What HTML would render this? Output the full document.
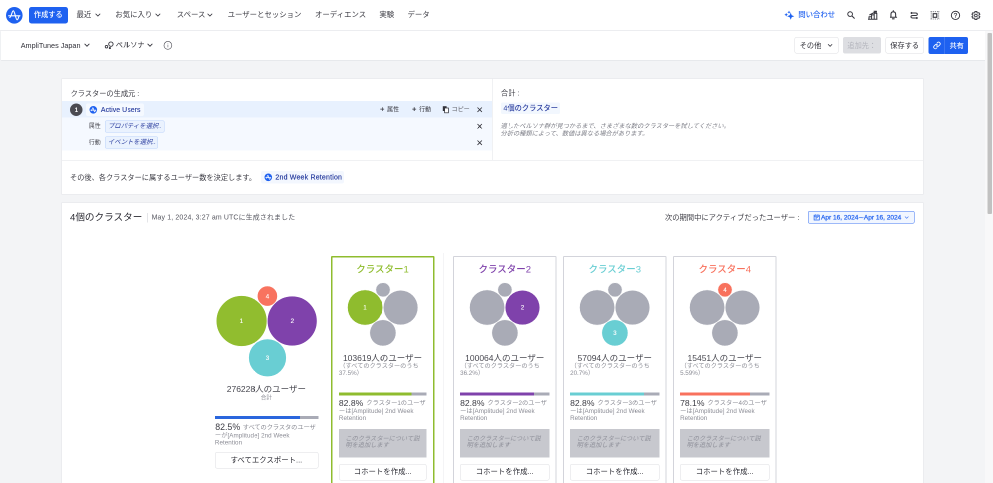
<!DOCTYPE html>
<html lang="ja"><head><meta charset="utf-8"><title>ペルソナ - AmpliTunes Japan</title>
<style>
html,body{margin:0;padding:0;width:993px;height:483px;overflow:hidden;background:#f3f4f6}
#root{position:absolute;left:0;top:0;width:1986px;height:966px;transform:scale(.5);transform-origin:0 0;will-change:transform;font-family:"Liberation Sans","Noto Sans CJK JP",sans-serif;color:#33333b;overflow:hidden;background:#f3f4f6}
#root *{box-sizing:border-box}
.a{position:absolute}
.t{position:absolute;white-space:nowrap;line-height:1;font-size:14.4px}
.nav{font-size:14.8px;color:#3a3a42;top:21.8px}
svg{position:absolute;overflow:visible}
.btn{position:absolute;background:#fff;border:1px solid #dcdde1;border-radius:4px;text-align:center;white-space:nowrap}
.card{position:absolute;top:513.4px;width:203px;height:480px;border:1px solid #c4c5cb;background:#fff}
.ct{position:absolute;left:0;right:0;text-align:center;white-space:nowrap;line-height:1}
.small{font-size:12.5px;color:#8b8c95;line-height:13.8px;position:absolute;white-space:nowrap}
.desc{position:absolute;background:#c7c8ce;color:#8e8f99;font-style:italic;font-size:12.4px;line-height:14.8px;white-space:nowrap}
.lat{letter-spacing:0.1px}
.bar{position:absolute;height:6px;background:#a9abb6}
.bar i{position:absolute;left:0;top:0;bottom:0;display:block}
</style></head><body>
<div id="root">

<!-- top nav -->
<div class="a" id="topnav" style="left:0;top:0;width:1986px;height:60.6px;background:#fff;border-bottom:1px solid #e6e7ea"></div>
<svg style="left:12.2px;top:13.6px;width:33.2px;height:33.2px" viewBox="0 0 20 20"><circle cx="10" cy="10" r="10" fill="#1e61f0"/><path d="M3.2 10.6 H16.8 M4.6 12.6 C6.2 12.6 7.2 4.6 8.8 4.6 C10.6 4.6 11.6 15.4 13.4 15.4 C14.4 15.4 15 12.8 15.6 11.4" fill="none" stroke="#fff" stroke-width="1.3" stroke-linecap="round"/></svg>
<div class="a" style="left:58px;top:14px;width:77.8px;height:33.4px;background:#1e61f0;border-radius:5px"></div>
<div class="t nav" style="left:67.8px;color:#fff;font-size:14.4px;top:22.2px;font-weight:500">作成する</div>
<div class="t nav" style="left:153px">最近</div>
<div class="t nav" style="left:230.6px">お気に入り</div>
<div class="t nav" style="left:353.4px">スペース</div>
<div class="t nav" style="left:455.2px">ユーザーとセッション</div>
<div class="t nav" style="left:630px">オーディエンス</div>
<div class="t nav" style="left:758.8px">実験</div>
<div class="t nav" style="left:815px">データ</div>
<svg class="chev" style="left:189.8px;top:25.8px;width:11.6px;height:7.9px" viewBox="0 0 10 6.8"><path d="M1 1.3 L5 5.3 L9 1.3" fill="none" stroke="#33333b" stroke-width="1.45"/></svg>
<svg class="chev" style="left:310.4px;top:25.8px;width:11.6px;height:7.9px" viewBox="0 0 10 6.8"><path d="M1 1.3 L5 5.3 L9 1.3" fill="none" stroke="#33333b" stroke-width="1.45"/></svg>
<svg class="chev" style="left:414.4px;top:25.8px;width:11.6px;height:7.9px" viewBox="0 0 10 6.8"><path d="M1 1.3 L5 5.3 L9 1.3" fill="none" stroke="#33333b" stroke-width="1.45"/></svg>

<!-- right nav -->
<svg style="left:1568px;top:20px;width:24px;height:24px" viewBox="784 10 12 12"><path d="M790.7 12.6 L791.7 15.2 L794.3 16.2 L791.7 17.2 L790.7 19.8 L789.7 17.2 L787.1 16.2 L789.7 15.2 Z" fill="#1e61f0"/><path d="M786.2 12.9 L786.8 14.1 L788 14.7 L786.8 15.3 L786.2 16.5 L785.6 15.3 L784.4 14.7 L785.6 14.1 Z" fill="#1e61f0"/><path d="M789 10.6 L789.5 11.7 L790.6 12.2 L789.5 12.7 L789 13.8 L788.5 12.7 L787.4 12.2 L788.5 11.7 Z" fill="#1e61f0"/></svg>
<div class="t nav" style="left:1596.4px;color:#2a68f0;font-weight:500;font-size:14.8px">問い合わせ</div>
<!-- search -->
<svg style="left:1693.2px;top:20.8px;width:18px;height:18px" viewBox="0 0 18 18"><circle cx="7.2" cy="7.2" r="4.7" fill="none" stroke="#33333b" stroke-width="1.9"/><path d="M10.8 10.8 L15.6 15.6" stroke="#33333b" stroke-width="2.1" stroke-linecap="round"/></svg>
<!-- chart -->
<svg style="left:1732px;top:18px;width:28px;height:26px" viewBox="866 9 14 13"><path d="M868 19.3 H877.4 M869 19 V16.7 H871.6 V19 M871.6 16.7 V14.9 H874.2 V19 M874.2 14.9 V13.2 H876.8 V19 M869.4 15 L875.8 11.7 M873.6 11.3 L876.5 11.2 L875.9 13.9" fill="none" stroke="#33333b" stroke-width="1" stroke-linejoin="round"/></svg>
<!-- bell -->
<svg style="left:1776.8px;top:19.2px;width:19.2px;height:22px" viewBox="0 0 18 20"><path d="M4.6 14 V8.8 C4.6 5.8 6.4 4 9 4 C11.6 4 13.4 5.8 13.4 8.8 V14 M2.8 14.2 H15.2 M7.4 17.2 H10.6 M9 1.8 V3.8" fill="none" stroke="#33333b" stroke-width="2" stroke-linecap="round"/></svg>
<!-- route -->
<svg style="left:1816px;top:18px;width:24px;height:26px" viewBox="908 9 12 13"><path d="M911 13 H915.5 C918 13 918 15.5 915.5 15.5 H912.8 C910.3 15.5 910.3 18 912.8 18 H917.2 M911.7 12.4 L910.9 13 L911.7 13.6 M916.7 17.4 L917.5 18 L916.7 18.6" fill="none" stroke="#33333b" stroke-width="0.95" stroke-linecap="round" stroke-linejoin="round"/></svg>
<!-- frame -->
<svg style="left:1858px;top:18px;width:24px;height:26px" viewBox="929 9 12 13"><rect x="933.2" y="13.7" width="3.6" height="3.6" fill="none" stroke="#33333b" stroke-width="1.1"/><path d="M931.2 11.2 V19.6 M938.7 11.2 V19.6" stroke="#6b6b73" stroke-width="0.8" stroke-dasharray="1.2 0.9"/><path d="M930.6 11.7 H939.3 M930.6 19 H939.3" stroke="#6b6b73" stroke-width="0.8" stroke-dasharray="1.2 0.9"/></svg>
<!-- help -->
<svg style="left:1898px;top:18px;width:24px;height:26px" viewBox="949 9 12 13"><circle cx="955.5" cy="15.4" r="4.15" fill="none" stroke="#33333b" stroke-width="0.95"/><text x="955.5" y="17.7" font-size="6.6" fill="#33333b" stroke="#33333b" stroke-width="0.15" text-anchor="middle" font-family="Liberation Sans, sans-serif">?</text></svg>
<!-- gear -->
<svg style="left:1940px;top:18px;width:24px;height:26px" viewBox="970 9 12 13"><path d="M974.88 11.42 L976.92 11.42 L976.91 12.57 L977.93 13.16 L978.92 12.58 L979.94 14.34 L978.94 14.91 L978.94 16.09 L979.94 16.66 L978.92 18.42 L977.93 17.84 L976.91 18.43 L976.92 19.58 L974.88 19.58 L974.89 18.43 L973.87 17.84 L972.88 18.42 L971.86 16.66 L972.86 16.09 L972.86 14.91 L971.86 14.34 L972.88 12.58 L973.87 13.16 L974.89 12.57 Z" fill="none" stroke="#33333b" stroke-width="0.9" stroke-linejoin="round"/><circle cx="975.9" cy="15.5" r="1.35" fill="none" stroke="#33333b" stroke-width="0.85"/></svg>

<!-- second bar -->
<div class="a" id="bar2" style="left:1.6px;top:61.6px;width:1969.2px;height:58.6px;background:#fff;box-shadow:0 1px 1.6px #dcdde1"></div>
<div class="t" style="left:41.4px;top:83.6px;font-size:14.5px;color:#2f2f37" id="ws">AmpliTunes Japan</div>
<svg class="chev" style="left:167.82px;top:86.24px;width:11.96px;height:8.32px" viewBox="0 0 10 6.8"><path d="M1 1.3 L5 5.3 L9 1.3" fill="none" stroke="#33333b" stroke-width="1.45"/></svg>
<svg style="left:208px;top:80px;width:22px;height:20px" viewBox="104 40 11 10"><circle cx="106.5" cy="46.7" r="1.25" fill="none" stroke="#33333b" stroke-width="0.85"/><circle cx="110.9" cy="44.1" r="2.2" fill="none" stroke="#33333b" stroke-width="0.9"/><circle cx="109.9" cy="48.1" r="1.05" fill="#33333b"/></svg>
<div class="t" style="left:231.6px;top:83.2px;font-size:14.4px;color:#2f2f37">ペルソナ</div>
<svg class="chev" style="left:293.82px;top:86.24px;width:11.96px;height:8.32px" viewBox="0 0 10 6.8"><path d="M1 1.3 L5 5.3 L9 1.3" fill="none" stroke="#33333b" stroke-width="1.45"/></svg>
<svg style="left:327.2px;top:82px;width:17.6px;height:17.6px" viewBox="0 0 18 18"><circle cx="9" cy="9" r="8" fill="none" stroke="#4a4a52" stroke-width="1.3"/><path d="M9 7.8 V13 M9 5 V6.4" stroke="#77777f" stroke-width="1.4"/></svg>

<div class="btn" style="left:1589.2px;top:74.4px;width:87.6px;height:32.8px"></div>
<div class="t" style="left:1599.4px;top:83.6px;font-size:14.4px;color:#2f2f37">その他</div>
<svg class="chev" style="left:1654.8px;top:87.4px;width:10.4px;height:7.2px" viewBox="0 0 10 6.8"><path d="M1 1.3 L5 5.3 L9 1.3" fill="none" stroke="#33333b" stroke-width="1.45"/></svg>
<div class="a" style="left:1685.8px;top:74.4px;width:76px;height:32.8px;background:#dddee2;border-radius:4px"></div>
<div class="t" style="left:1694.8px;top:83.6px;font-size:14.4px;color:#b3b4bc">追加先：</div>
<div class="btn" style="left:1770.8px;top:74.4px;width:77.4px;height:32.8px"></div>
<div class="t" style="left:1780.6px;top:83.6px;font-size:14.4px;color:#2f2f37">保存する</div>
<div class="a" style="left:1856.6px;top:74px;width:79.8px;height:33.6px;background:#1e61f0;border-radius:4px"></div>
<div class="a" style="left:1888px;top:74px;width:1.2px;height:33.6px;background:#5b8cf5"></div>
<svg style="left:1866px;top:83.4px;width:15.8px;height:15.8px" viewBox="0 0 24 24"><path d="M10 13a5 5 0 0 0 7.54.54l3-3a5 5 0 0 0-7.07-7.07l-1.72 1.71" fill="none" stroke="#fff" stroke-width="2.5" stroke-linecap="round"/><path d="M14 11a5 5 0 0 0-7.54-.54l-3 3a5 5 0 0 0 7.07 7.07l1.71-1.71" fill="none" stroke="#fff" stroke-width="2.5" stroke-linecap="round"/></svg>
<div class="t" style="left:1899.2px;top:84.4px;font-size:14.2px;color:#fff;font-weight:500">共有</div>

<!-- scrollbar -->
<div class="a" style="left:1970.4px;top:61.6px;width:15.6px;height:904.4px;background:#f8f8f9"></div>
<div class="a" style="left:1975.2px;top:65.6px;width:8.4px;height:362.8px;background:#c1c1c1;border-radius:2px"></div>

<!-- panel 1 -->
<div class="a" id="p1" style="left:124px;top:157.8px;width:1722.2px;height:230.2px;background:#fff;box-shadow:0 0 0 1.3px #e7e8eb"></div>
<div class="t" style="left:141.2px;top:180px;font-size:14.4px;color:#3c3c44">クラスターの生成元 :</div>
<div class="a" style="left:124px;top:202.4px;width:860px;height:33px;background:#e8f1fe"></div>
<div class="a" style="left:124px;top:235px;width:860px;height:66.2px;background:#f5f9ff"></div>
<div class="a" style="left:140.2px;top:206.8px;width:25.2px;height:25.2px;border-radius:50%;background:#4b4b52"></div>
<div class="t" style="left:149.6px;top:213.6px;font-size:12px;color:#fff;font-weight:bold">1</div>
<div class="a" style="left:172px;top:207.2px;width:115.6px;height:24.6px;background:#f5f9ff;border-radius:4px"></div>
<svg style="left:179.2px;top:211.8px;width:15.2px;height:15.2px" viewBox="0 0 20 20"><circle cx="10" cy="10" r="10" fill="#1e61f0"/><path d="M3.2 10.8 H16.8 M4.6 12.8 C6.2 12.8 7.2 4.6 8.8 4.6 C10.6 4.6 11.6 15.4 13.4 15.4 C14.4 15.4 15 12.8 15.6 11.4" fill="none" stroke="#fff" stroke-width="1.8" stroke-linecap="round"/></svg>
<div class="t" id="au" style="left:201.8px;top:212.8px;font-size:13.8px;color:#23389c;letter-spacing:0.16px;-webkit-text-stroke:0.24px #23389c">Active Users</div>
<div class="t" style="left:177.6px;top:245.8px;font-size:12px;color:#4a4a52">属性</div>
<div class="a" style="left:210px;top:240.6px;width:119.4px;height:24.4px;background:#eaf2fe;border:1px solid #b9d1fa;border-radius:3px"></div>
<div class="t" style="left:215.8px;top:245.8px;font-size:12.7px;color:#2c3fa0;font-style:italic">プロパティを選択..</div>
<div class="t" style="left:177.6px;top:278.8px;font-size:12px;color:#4a4a52">行動</div>
<div class="a" style="left:210px;top:272.8px;width:106px;height:24.4px;background:#eaf2fe;border:1px solid #b9d1fa;border-radius:3px"></div>
<div class="t" style="left:215.8px;top:278.4px;font-size:12.7px;color:#2c3fa0;font-style:italic">イベントを選択..</div>

<div class="t" style="left:760px;top:210.4px;font-size:15.2px;color:#33333b;font-weight:bold">+</div><div class="t" style="left:774px;top:212.8px;font-size:12.1px;color:#33333b">属性</div>
<div class="t" style="left:824px;top:210.4px;font-size:15.2px;color:#33333b;font-weight:bold">+</div><div class="t" style="left:838.2px;top:212.8px;font-size:12.1px;color:#33333b">行動</div>
<svg style="left:884.4px;top:211.2px;width:14.4px;height:16px" viewBox="0 0 14 16"><rect x="1.4" y="1.4" width="7.6" height="9.6" fill="#33333b"/><rect x="5" y="5" width="7.6" height="9.6" fill="#fff" stroke="#33333b" stroke-width="1.5"/></svg>
<div class="t" style="left:903px;top:212.8px;font-size:12.2px;color:#5c5c64">コピー</div>
<svg style="left:954px;top:213.6px;width:10.8px;height:10.8px" viewBox="0 0 10 10"><path d="M0.9 0.9 L9.1 9.1 M9.1 0.9 L0.9 9.1" stroke="#33333b" stroke-width="1.55"/></svg>
<svg style="left:954px;top:247.2px;width:10.8px;height:10.8px" viewBox="0 0 10 10"><path d="M0.9 0.9 L9.1 9.1 M9.1 0.9 L0.9 9.1" stroke="#33333b" stroke-width="1.55"/></svg>
<svg style="left:954px;top:280.4px;width:10.8px;height:10.8px" viewBox="0 0 10 10"><path d="M0.9 0.9 L9.1 9.1 M9.1 0.9 L0.9 9.1" stroke="#33333b" stroke-width="1.55"/></svg>

<div class="a" style="left:983.8px;top:157.4px;width:1.4px;height:163.4px;background:#e1e2e6"></div>
<div class="a" style="left:123.8px;top:320px;width:1722.6px;height:1.4px;background:#e1e2e6"></div>
<div class="t" style="left:1002px;top:179.2px;font-size:14.4px;color:#3c3c44">合計 :</div>
<div class="a" style="left:1002px;top:204.8px;width:118.4px;height:23px;background:#f2f7fe;border-radius:3px"></div>
<div class="t" style="left:1006.8px;top:209px;font-size:14.5px;color:#2c3fa0;font-weight:500">4個のクラスター</div>
<div class="t" style="left:1001px;top:246px;font-size:12.44px;color:#7e7f88;font-style:italic">適したペルソナ群が見つかるまで、さまざまな数のクラスターを試してください。</div>
<div class="t" style="left:1001px;top:260.6px;font-size:12.44px;color:#7e7f88;font-style:italic">分析の種類によって、数値は異なる場合があります。</div>

<div class="t" style="left:140px;top:347.6px;font-size:14.4px;color:#3c3c44">その後、各クラスターに属するユーザー数を決定します。</div>
<div class="a" style="left:522.4px;top:341.8px;width:165.8px;height:25px;background:#f3f7fe;border-radius:4px"></div>
<svg style="left:529.2px;top:346.8px;width:15.2px;height:15.2px" viewBox="0 0 20 20"><circle cx="10" cy="10" r="10" fill="#1e61f0"/><path d="M3.2 10.8 H16.8 M4.6 12.8 C6.2 12.8 7.2 4.6 8.8 4.6 C10.6 4.6 11.6 15.4 13.4 15.4 C14.4 15.4 15 12.8 15.6 11.4" fill="none" stroke="#fff" stroke-width="1.8" stroke-linecap="round"/></svg>
<div class="t" id="wr" style="left:550.8px;top:347.4px;font-size:14px;color:#23389c;letter-spacing:0.38px;-webkit-text-stroke:0.3px #23389c">2nd Week Retention</div>

<!-- panel 2 -->
<div class="a" id="p2" style="left:124px;top:405.8px;width:1722.2px;height:580px;background:#fff;box-shadow:0 0 0 1.3px #e7e8eb"></div>
<div class="t" style="left:140px;top:424.8px;font-size:19.2px;color:#2b2b33">4個のクラスター</div>
<div class="a" style="left:293.6px;top:426px;width:1.2px;height:18.8px;background:#c9cad0"></div>
<div class="t" id="gen" style="left:303.2px;top:428.4px;font-size:13.9px;color:#55565f;letter-spacing:0.3px">May 1, 2024, 3:27 am UTCに生成されました</div>
<div class="t" style="left:1329.8px;top:427.8px;font-size:14.6px;color:#3c3c44">次の期間中にアクティブだったユーザー :</div>
<div class="a" style="left:1616px;top:421.6px;width:212.6px;height:25.8px;background:#f1f6ff;border:1.3px solid #3a72f2;border-radius:3px"></div>
<svg style="left:1626.8px;top:427.8px;width:12.8px;height:13.2px" viewBox="0 0 13 13"><rect x="1.2" y="2.2" width="10.6" height="9.8" fill="none" stroke="#1e61f0" stroke-width="1.5"/><path d="M1.2 5 H11.8 M4 0.6 V3 M9 0.6 V3 M4 7.4 H9 M4 9.6 H7" stroke="#1e61f0" stroke-width="1.3"/></svg>
<div class="t" id="date" style="left:1642px;top:428.4px;font-size:13.06px;color:#2a68f0;-webkit-text-stroke:0.56px #2a68f0">Apr 16, 2024<span style="font-size:19px;line-height:0;position:relative;top:1.6px;-webkit-text-stroke:0">~</span>Apr 16, 2024</div>
<svg class="chev" style="left:1809.2px;top:432.2px;width:8.8px;height:6px" viewBox="0 0 10 6.8"><path d="M1 1.3 L5 5.3 L9 1.3" fill="none" stroke="#3a72f2" stroke-width="1.5"/></svg>

<!-- summary bubbles -->
<svg style="left:400px;top:500px;width:260px;height:280px" viewBox="200 250 130 140">
<circle cx="241.6" cy="321" r="25.4" fill="#91bd2f" stroke="#fff" stroke-width="0.6"/>
<circle cx="292.2" cy="321" r="24.9" fill="#7f42ab" stroke="#fff" stroke-width="0.6"/>
<circle cx="267.5" cy="357.8" r="18.9" fill="#69ced3" stroke="#fff" stroke-width="0.6"/>
<circle cx="267.4" cy="296.1" r="10.1" fill="#f8735f" stroke="#fff" stroke-width="0.6"/>
<g font-size="6.2" fill="#fff" stroke="#fff" stroke-width="0.12" text-anchor="middle" font-family="Liberation Sans, sans-serif">
<text x="241.4" y="323.2">1</text><text x="292.3" y="323.2">2</text><text x="267.5" y="360">3</text><text x="267.5" y="298.3">4</text></g>
</svg>
<div class="ct" style="left:429px;width:207.4px;right:auto;top:769.6px;font-size:17px;color:#484850">276228人のユーザー</div>
<div class="ct" style="left:429px;width:207.4px;right:auto;top:789.8px;font-size:11.2px;color:#8b8c95">合計</div>
<div class="bar" style="left:429.8px;top:832.2px;width:206.8px;height:5.6px"><i style="width:82.5%;background:#2a66dd"></i></div>
<div class="t" style="left:430.4px;top:846px;font-size:17.6px;color:#3c3c44">82.5%</div>
<div class="small" style="left:485.6px;top:848.6px;letter-spacing:-0.2px">すべてのクラスタのユーザ</div>
<div class="small lat" style="left:429.8px;top:865.2px">ーが[Amplitude] 2nd Week</div>
<div class="small lat" style="left:429.8px;top:879px">Retention</div>
<div class="btn" style="left:430px;top:904px;width:206.8px;height:32.6px"></div>
<div class="ct" style="left:429px;width:207.4px;right:auto;top:913px;font-size:14.8px;color:#2b2b33">すべてエクスポート...</div>

<div class="a" style="left:885.8px;top:506px;width:1.4px;height:480px;background:#e8e8ec"></div>
<!-- cards inserted here -->
<!-- card 1 -->
<div class="a" style="left:661.6px;top:511.8px;width:207px;height:480px;border:3px solid #8fbc2e;border-radius:2px;background:#fff"></div>
<div class="ct" style="left:661.6px;width:207px;right:auto;top:528.6px;font-size:19px;color:#8fbc2e;font-weight:500">クラスター1</div>
<svg style="left:661.6px;top:560px;width:207px;height:140px" viewBox="330.8 280 103.5 70">
<circle cx="364.9" cy="307.5" r="17.6" fill="#8fbc2e" stroke="#fff" stroke-width="0.5"/>
<circle cx="400.4" cy="307.6" r="17.3" fill="#a9abb6" stroke="#fff" stroke-width="0.5"/>
<circle cx="382.7" cy="332.9" r="13.1" fill="#a9abb6" stroke="#fff" stroke-width="0.5"/>
<circle cx="382.8" cy="289.8" r="7.15" fill="#a9abb6" stroke="#fff" stroke-width="0.5"/>
<text x="364.9" y="309.6" font-size="6" fill="#fff" stroke="#fff" stroke-width="0.12" text-anchor="middle" font-family="Liberation Sans, sans-serif">1</text>
</svg>
<div class="ct" style="left:661.6px;width:207px;right:auto;top:707.6px;font-size:17px;color:#484850">103619人のユーザー</div>
<div class="small" style="left:678.8px;top:726.4px;font-size:12.32px">（すべてのクラスターのうち</div>
<div class="small" style="left:677.8px;top:740.2px">37.5%）</div>
<div class="bar" style="left:677.8px;top:785px;width:175.2px;height:6.2px"><i style="width:82.8%;background:#8fbc2e"></i></div>
<div class="t" style="left:677.8px;top:798px;font-size:17.2px;color:#3c3c44">82.8%</div>
<div class="small" style="left:732.4px;top:800.4px">クラスター1のユーザ</div>
<div class="small lat" style="left:677.8px;top:815.6px">ーは[Amplitude] 2nd Week</div>
<div class="small lat" style="left:677.8px;top:829.8px">Retention</div>
<div class="desc" style="left:677.8px;top:857.8px;width:175.2px;height:57.4px"></div>
<div class="desc" style="background:none;left:690.8px;top:869.8px">このクラスターについて説</div>
<div class="desc" style="background:none;left:690.8px;top:882.8px">明を追加します</div>
<div class="btn" style="left:677.8px;top:928.2px;width:175.2px;height:32.4px"></div>
<div class="ct" style="left:677.8px;width:175.2px;right:auto;top:936.4px;font-size:14.8px;color:#2b2b33">コホートを作成...</div>
<!-- card 2 -->
<div class="a" style="left:906px;top:511.8px;width:207px;height:480px;border:2.8px solid #d3d4db;border-radius:2px;background:#fff"></div>
<div class="ct" style="left:906px;width:207px;right:auto;top:528.6px;font-size:19px;color:#7f42ab;font-weight:500">クラスター2</div>
<svg style="left:906px;top:560px;width:207px;height:140px" viewBox="453.0 280 103.5 70">
<circle cx="487.1" cy="307.5" r="17.6" fill="#a9abb6" stroke="#fff" stroke-width="0.5"/>
<circle cx="522.5" cy="307.6" r="17.3" fill="#7f42ab" stroke="#fff" stroke-width="0.5"/>
<circle cx="504.9" cy="332.9" r="13.1" fill="#a9abb6" stroke="#fff" stroke-width="0.5"/>
<circle cx="504.9" cy="289.8" r="7.15" fill="#a9abb6" stroke="#fff" stroke-width="0.5"/>
<text x="522.5" y="309.7" font-size="6" fill="#fff" stroke="#fff" stroke-width="0.12" text-anchor="middle" font-family="Liberation Sans, sans-serif">2</text>
</svg>
<div class="ct" style="left:906px;width:207px;right:auto;top:707.6px;font-size:17px;color:#484850">100064人のユーザー</div>
<div class="small" style="left:921.2px;top:726.4px;font-size:12.32px">（すべてのクラスターのうち</div>
<div class="small" style="left:920.2px;top:740.2px">36.2%）</div>
<div class="bar" style="left:920.2px;top:785px;width:178.4px;height:6.2px"><i style="width:82.8%;background:#7f42ab"></i></div>
<div class="t" style="left:920.2px;top:798px;font-size:17.2px;color:#3c3c44">82.8%</div>
<div class="small" style="left:974.8px;top:800.4px">クラスター2のユーザ</div>
<div class="small lat" style="left:920.2px;top:815.6px">ーは[Amplitude] 2nd Week</div>
<div class="small lat" style="left:920.2px;top:829.8px">Retention</div>
<div class="desc" style="left:920.2px;top:857.8px;width:178.4px;height:57.4px"></div>
<div class="desc" style="background:none;left:933.2px;top:869.8px">このクラスターについて説</div>
<div class="desc" style="background:none;left:933.2px;top:882.8px">明を追加します</div>
<div class="btn" style="left:920.2px;top:928.2px;width:178.4px;height:32.4px"></div>
<div class="ct" style="left:920.2px;width:178.4px;right:auto;top:936.4px;font-size:14.8px;color:#2b2b33">コホートを作成...</div>
<!-- card 3 -->
<div class="a" style="left:1126px;top:511.8px;width:207px;height:480px;border:2.8px solid #d3d4db;border-radius:2px;background:#fff"></div>
<div class="ct" style="left:1126px;width:207px;right:auto;top:528.6px;font-size:19px;color:#69ced3;font-weight:500">クラスター3</div>
<svg style="left:1126px;top:560px;width:207px;height:140px" viewBox="563.0 280 103.5 70">
<circle cx="597.1" cy="307.5" r="17.6" fill="#a9abb6" stroke="#fff" stroke-width="0.5"/>
<circle cx="632.5" cy="307.6" r="17.3" fill="#a9abb6" stroke="#fff" stroke-width="0.5"/>
<circle cx="614.9" cy="332.9" r="13.1" fill="#69ced3" stroke="#fff" stroke-width="0.5"/>
<circle cx="615.0" cy="289.8" r="7.15" fill="#a9abb6" stroke="#fff" stroke-width="0.5"/>
<text x="614.9" y="335.0" font-size="6" fill="#fff" stroke="#fff" stroke-width="0.12" text-anchor="middle" font-family="Liberation Sans, sans-serif">3</text>
</svg>
<div class="ct" style="left:1126px;width:207px;right:auto;top:707.6px;font-size:17px;color:#484850">57094人のユーザー</div>
<div class="small" style="left:1141.2px;top:726.4px;font-size:12.32px">（すべてのクラスターのうち</div>
<div class="small" style="left:1140.2px;top:740.2px">20.7%）</div>
<div class="bar" style="left:1140.2px;top:785px;width:178.4px;height:6.2px"><i style="width:82.8%;background:#69ced3"></i></div>
<div class="t" style="left:1140.2px;top:798px;font-size:17.2px;color:#3c3c44">82.8%</div>
<div class="small" style="left:1194.8px;top:800.4px">クラスター3のユーザ</div>
<div class="small lat" style="left:1140.2px;top:815.6px">ーは[Amplitude] 2nd Week</div>
<div class="small lat" style="left:1140.2px;top:829.8px">Retention</div>
<div class="desc" style="left:1140.2px;top:857.8px;width:178.4px;height:57.4px"></div>
<div class="desc" style="background:none;left:1153.2px;top:869.8px">このクラスターについて説</div>
<div class="desc" style="background:none;left:1153.2px;top:882.8px">明を追加します</div>
<div class="btn" style="left:1140.2px;top:928.2px;width:178.4px;height:32.4px"></div>
<div class="ct" style="left:1140.2px;width:178.4px;right:auto;top:936.4px;font-size:14.8px;color:#2b2b33">コホートを作成...</div>
<!-- card 4 -->
<div class="a" style="left:1346px;top:511.8px;width:207px;height:480px;border:2.8px solid #d3d4db;border-radius:2px;background:#fff"></div>
<div class="ct" style="left:1346px;width:207px;right:auto;top:528.6px;font-size:19px;color:#f8715d;font-weight:500">クラスター4</div>
<svg style="left:1346px;top:560px;width:207px;height:140px" viewBox="673.0 280 103.5 70">
<circle cx="707.1" cy="307.5" r="17.6" fill="#a9abb6" stroke="#fff" stroke-width="0.5"/>
<circle cx="742.5" cy="307.6" r="17.3" fill="#a9abb6" stroke="#fff" stroke-width="0.5"/>
<circle cx="724.9" cy="332.9" r="13.1" fill="#a9abb6" stroke="#fff" stroke-width="0.5"/>
<circle cx="725.0" cy="289.8" r="7.15" fill="#f8715d" stroke="#fff" stroke-width="0.5"/>
<text x="725.0" y="291.9" font-size="6" fill="#fff" stroke="#fff" stroke-width="0.12" text-anchor="middle" font-family="Liberation Sans, sans-serif">4</text>
</svg>
<div class="ct" style="left:1346px;width:207px;right:auto;top:707.6px;font-size:17px;color:#484850">15451人のユーザー</div>
<div class="small" style="left:1361.2px;top:726.4px;font-size:12.32px">（すべてのクラスターのうち</div>
<div class="small" style="left:1360.2px;top:740.2px">5.59%）</div>
<div class="bar" style="left:1360.2px;top:785px;width:178.4px;height:6.2px"><i style="width:78.1%;background:#f8715d"></i></div>
<div class="t" style="left:1360.2px;top:798px;font-size:17.2px;color:#3c3c44">78.1%</div>
<div class="small" style="left:1414.8px;top:800.4px">クラスター4のユーザ</div>
<div class="small lat" style="left:1360.2px;top:815.6px">ーは[Amplitude] 2nd Week</div>
<div class="small lat" style="left:1360.2px;top:829.8px">Retention</div>
<div class="desc" style="left:1360.2px;top:857.8px;width:178.4px;height:57.4px"></div>
<div class="desc" style="background:none;left:1373.2px;top:869.8px">このクラスターについて説</div>
<div class="desc" style="background:none;left:1373.2px;top:882.8px">明を追加します</div>
<div class="btn" style="left:1360.2px;top:928.2px;width:178.4px;height:32.4px"></div>
<div class="ct" style="left:1360.2px;width:178.4px;right:auto;top:936.4px;font-size:14.8px;color:#2b2b33">コホートを作成...</div>
</div>
</body></html>
